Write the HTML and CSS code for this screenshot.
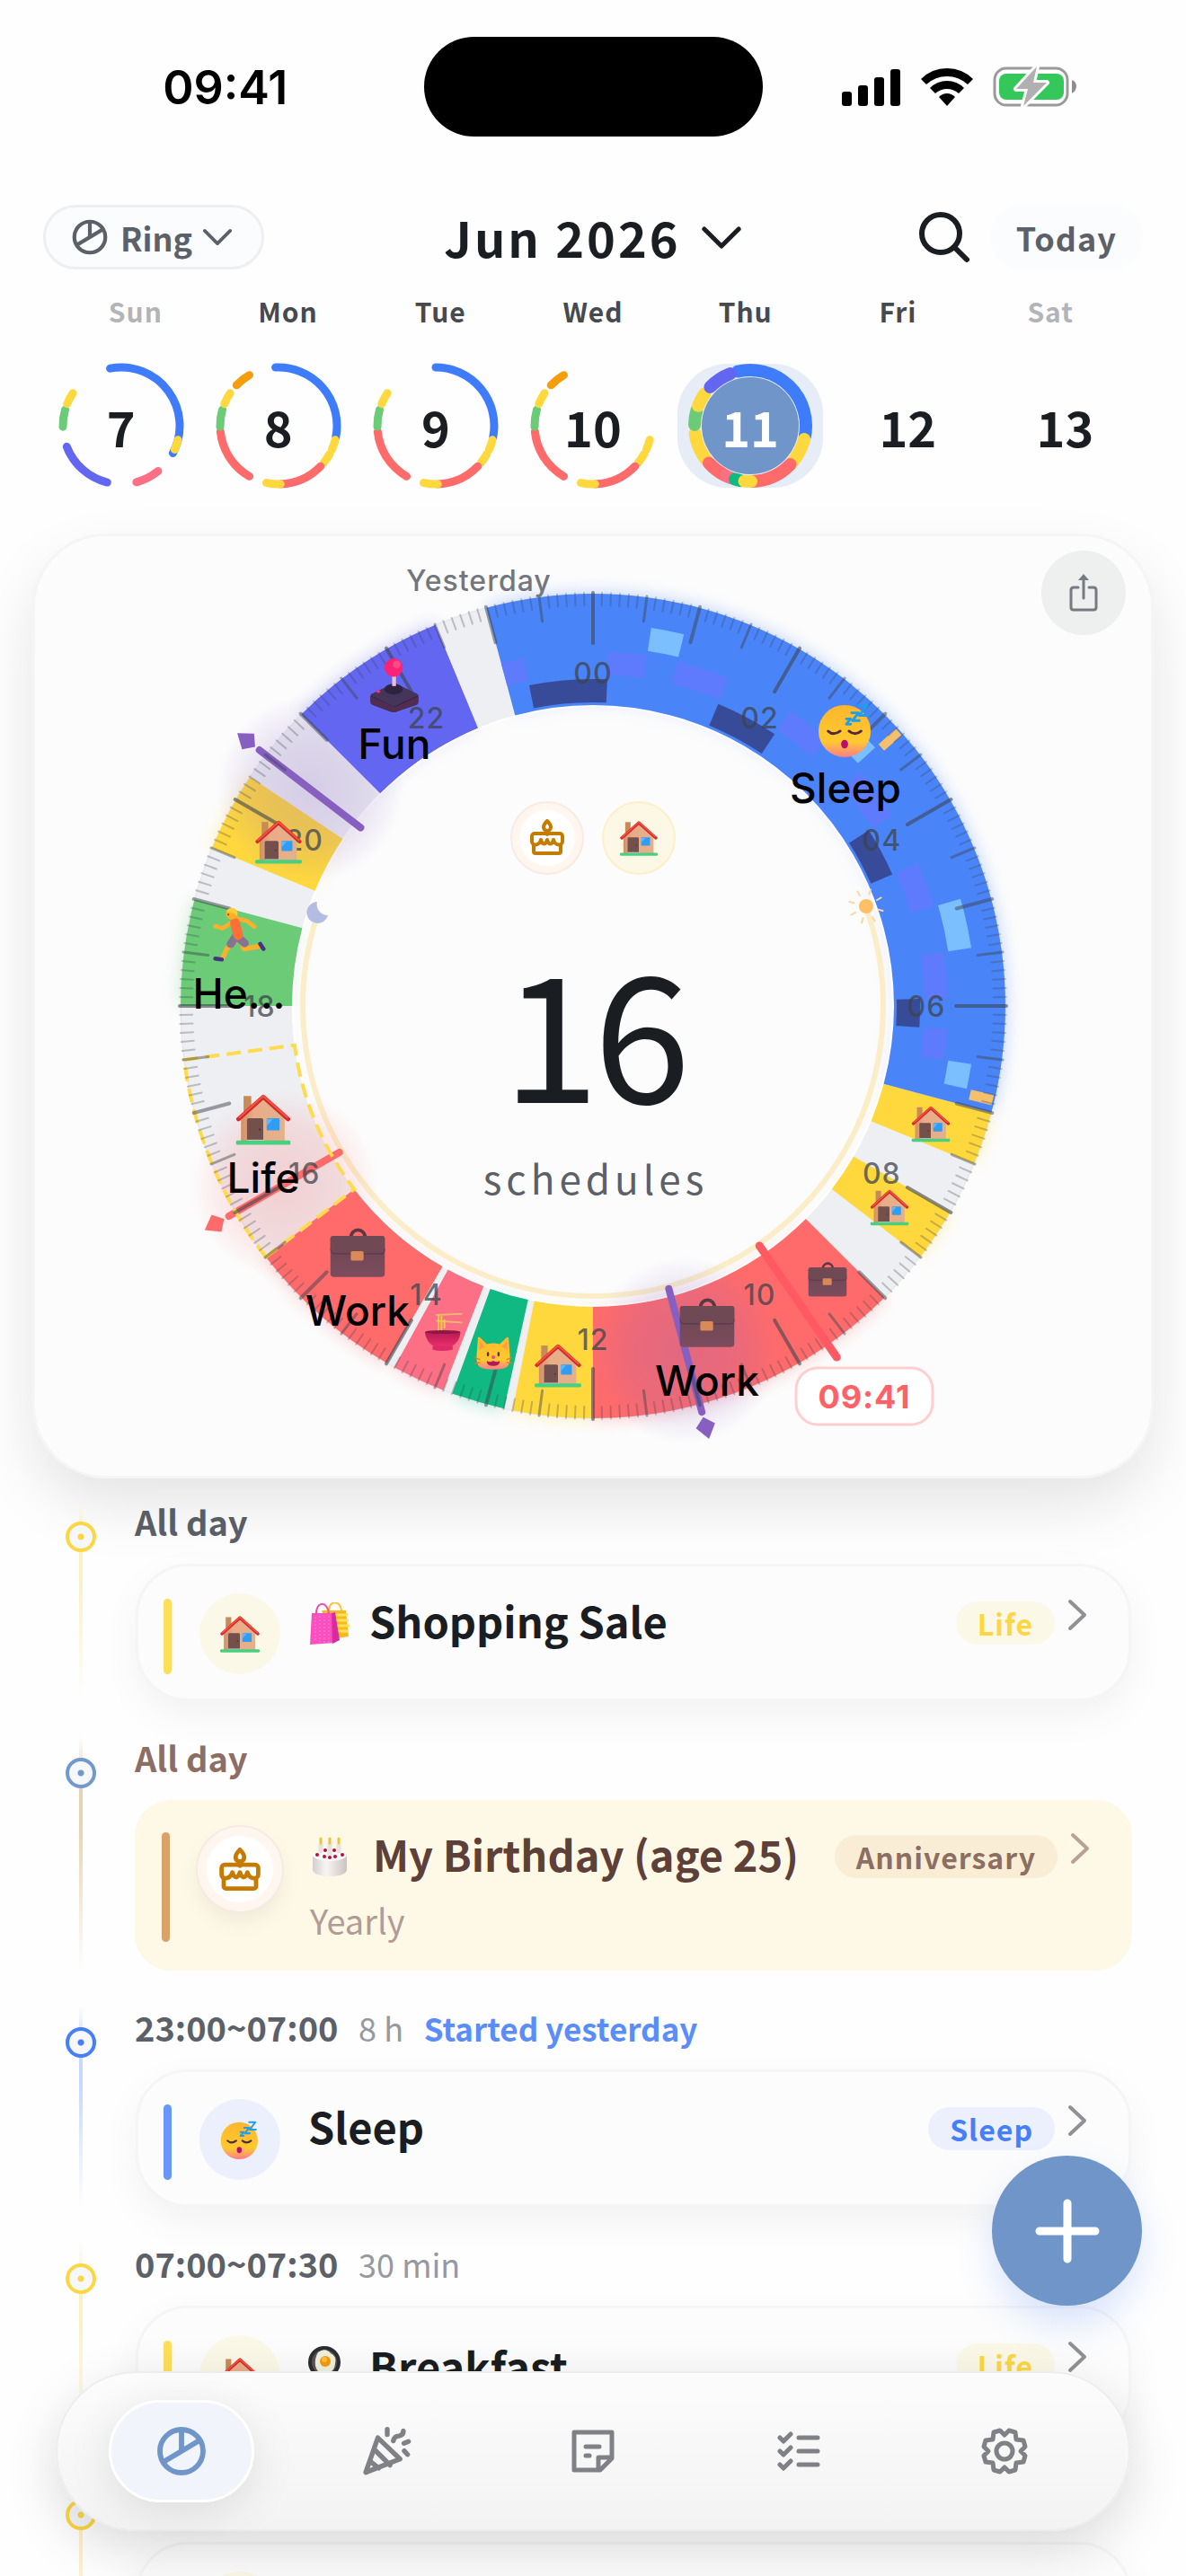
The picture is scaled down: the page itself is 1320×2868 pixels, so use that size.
FILE: index.html
```html
<!DOCTYPE html>
<html lang="en">

<head>
    <meta charset="UTF-8">
    <meta name="viewport" content="width=device-width, initial-scale=1.0">
    <title>Schedule Ring</title>
    <link rel="stylesheet" href="styles.css">
</head>

<body>
    <!-- shared icons -->
    <svg class="sprite" aria-hidden="true">
        <defs>
            <linearGradient id="wallFill" x1="0" x2="1"><stop offset="0" stop-color="#d29068"/><stop offset=".3" stop-color="#e9ad88"/><stop offset="1" stop-color="#e3b08a"/></linearGradient>
            <linearGradient id="caseFill" x1="0" y1="0" x2="0" y2="1"><stop offset="0" stop-color="#684650"/><stop offset="1" stop-color="#7d4c5e"/></linearGradient>
            <linearGradient id="faceFill" x1="0" y1="0" x2="0" y2="1"><stop offset="0" stop-color="#ffb62c"/><stop offset=".7" stop-color="#ffc92f"/><stop offset="1" stop-color="#ff7d8c"/></linearGradient>
            <linearGradient id="bowlFill" x1="0" y1="0" x2="0" y2="1"><stop offset="0" stop-color="#b51c55"/><stop offset="1" stop-color="#ee2e6c"/></linearGradient>
            <linearGradient id="cakeFill" x1="0" x2="1"><stop offset="0" stop-color="#d4cfcd"/><stop offset=".4" stop-color="#f7f5f4"/><stop offset="1" stop-color="#c9c3c0"/></linearGradient>
        </defs>
        <symbol id="ring" viewBox="0 0 24 24">
            <g fill="none" stroke="currentColor" stroke-width="2.2"><circle cx="12" cy="12" r="9"/><path d="M12 3v9M4.3 16.6 19.7 7.4"/></g>
        </symbol>
        <symbol id="chevronDown" viewBox="0 0 24 14">
            <path d="M2 2l10 10L22 2" fill="none" stroke="currentColor" stroke-width="2.6" stroke-linecap="round" stroke-linejoin="round"/>
        </symbol>
        <symbol id="chevronRight" viewBox="0 0 22 36">
            <path d="M3 3l16 15L3 33" fill="none" stroke="currentColor" stroke-width="4" stroke-linecap="round" stroke-linejoin="round"/>
        </symbol>
        <symbol id="cake" viewBox="0 0 38 40">
            <g fill="none" stroke="currentColor" stroke-width="4" stroke-linejoin="round" stroke-linecap="round">
                <path d="M19 2c-3 3-4 5-4 7a4 4 0 0 0 8 0c0-2-1-4-4-7zM19 13v4"/>
                <path d="M2 25v-6a3 3 0 0 1 3-3h28a3 3 0 0 1 3 3v6c0 5-8 5-10-2-2 6-5 6-7 0-2 6-5 6-7 0-2 7-10 7-10 2zM4 28v8a2 2 0 0 0 2 2h26a2 2 0 0 0 2-2v-8"/>
            </g>
        </symbol>
        <symbol id="house" viewBox="0 0 64 60">
            <path d="M9 3h9v24H9z" fill="#c88a59"/>
            <path d="M6 29 32 5l25 24v27H6z" fill="url(#wallFill)"/>
            <rect x="13" y="29" width="19" height="27" rx="2" fill="#74504c"/>
            <circle cx="28" cy="42" r="1" fill="#3e2723"/>
            <rect x="36" y="29" width="15" height="14" rx="1" fill="#2f9df4"/>
            <path d="M36 30h7l-7 8z" fill="#5cb8fa"/>
            <rect x="13" y="54" width="20" height="3" fill="#d8cfd0"/>
            <path d="M3 30 32 4l29 26" fill="none" stroke="#d8282f" stroke-width="5" stroke-linecap="round" stroke-linejoin="round"/>
            <path d="M4 28 32 3l28 25" fill="none" stroke="#f25a3e" stroke-width="2" stroke-linecap="round"/>
            <rect y="55" width="64" height="5" rx="2" fill="#48cf80"/>
        </symbol>
        <symbol id="briefcase" viewBox="0 0 64 58">
            <path d="M24 13c0-13 17-13 17 0" fill="none" stroke="#5a3a42" stroke-width="4"/>
            <rect y="10" width="64" height="48" rx="4" fill="url(#caseFill)"/>
            <path d="M0 14q0-4 4-4h56q4 0 4 4v12q0 5-5 5H6q-6 0-6-7z" fill="#6f4a55"/>
            <path d="M0 25q1 6 6 6h53q5 0 5-6" fill="none" stroke="#5b2f4a" stroke-width="1"/>
            <rect x="24" y="28" width="15" height="11" rx="2" fill="#d98a56"/>
        </symbol>
        <symbol id="sleepy" viewBox="0 0 64 64">
            <circle cx="31" cy="34" r="30" fill="url(#faceFill)"/>
            <g fill="none" stroke="#53293c" stroke-width="3" stroke-linecap="round">
                <path d="M12 34q6 6 14 0M36 34q7 6 14 0"/>
            </g>
            <ellipse cx="31" cy="49" rx="4" ry="5" fill="#bb0a72"/>
            <path d="M47 4h10L48 16h10M39 13h8l-7 9h8M33 20h5l-5 6h5" fill="none" stroke="#1e9ff0" stroke-width="3" stroke-linejoin="round" stroke-linecap="round"/>
        </symbol>
        <symbol id="joystick" viewBox="0 0 64 70">
            <path d="M3 46 28 34q4-2 8 0l25 12q2 1 2 3v8q0 2-2 3L35 69q-4 2-8 0L3 60q-2-1-2-3v-8q0-2 2-3z" fill="#33203b"/>
            <path d="M3 46 28 34q4-2 8 0l25 12q2 2 0 3L35 61q-4 2-8 0L3 49q-2-1 0-3z" fill="#45355a"/>
            <path d="M1 49l28 13q3 1 6 0l28-13v8q0 2-2 3L35 69q-4 2-8 0L3 60q-2-1-2-3z" fill="#4f2e52"/>
            <ellipse cx="31" cy="40" rx="12" ry="7" fill="#2f2440"/>
            <rect x="29" y="20" width="5" height="16" fill="#e6c2da"/>
            <circle cx="31" cy="12" r="12" fill="#fb2277"/>
            <circle cx="35" cy="8" r="5" fill="#ff5d86" opacity=".7"/>
            <ellipse cx="11" cy="43" rx="3" ry="2" fill="#f5307c"/>
        </symbol>
        <symbol id="runner" viewBox="0 0 64 66">
            <g fill="none" stroke-linecap="round" stroke-linejoin="round">
                <path d="M3 22 12 25 24 17M30 13 42 16 51 23" stroke="#ffb02a" stroke-width="5"/>
                <path d="M29 40 17 50 12 61M35 41 38 50 56 47" stroke="#ffb02a" stroke-width="6"/>
                <path d="M28 35 22 44M32 37l7 6" stroke="#83758f" stroke-width="10"/>
                <path d="M27 18l4 15" stroke="#ff7038" stroke-width="12"/>
                <path d="M3 62l8 1M58 44l4 6" stroke="#46347c" stroke-width="5"/>
            </g>
            <circle cx="23" cy="7" r="7" fill="#ffae25"/>
            <path d="M16 4q4-6 11-3 4 2 3 9l-4-3z" fill="#ffcb35"/>
            <circle cx="19" cy="8" r="1" fill="#5d3a2a"/>
        </symbol>
        <symbol id="noodles" viewBox="0 0 64 64">
            <path d="M20 3 62 1M20 13l42 3" stroke="#e6b96d" stroke-width="3" stroke-linecap="round"/>
            <path d="M23 3v29M28 4v28M33 11v15" stroke="#f4cb4b" stroke-width="3"/>
            <path d="M0 32h60q0 17-18 26H18Q1 50 0 32z" fill="url(#bowlFill)"/>
            <path d="M13 56h34v6q-17 4-34 0z" fill="#dc2a66"/>
            <ellipse cx="30" cy="32" rx="30" ry="3" fill="#8f1744"/>
        </symbol>
        <symbol id="cat" viewBox="0 0 64 58">
            <path d="M6 2q2-3 5 1l10 10q11-3 22 0L53 3q4-4 5 0l2 27q2 22-10 24-18 4-36 0Q2 52 4 30z" fill="url(#faceFill)"/>
            <path d="M9 8l8 9-9 6zM55 8l-8 9 9 6z" fill="#ff9b4a"/>
            <ellipse cx="23" cy="30" rx="2" ry="4" fill="#5a3a2f"/><ellipse cx="41" cy="30" rx="2" ry="4" fill="#5a3a2f"/>
            <circle cx="32" cy="35" r="3" fill="#ff3f8a"/>
            <path d="M21 41q5 4 11 0 6 4 11 0 0 9-11 9t-11-9z" fill="#b41758"/>
            <path d="M1 36l8 3M0 46l9-2M63 36l-8 3M64 46l-9-2" stroke="#e87528" stroke-width="2" stroke-linecap="round"/>
        </symbol>
        <symbol id="bags" viewBox="0 0 48 48">
            <path d="M15 9h27l3 29-20 3z" fill="#f7b91e"/>
            <path d="M20 14h24M21 20h24M22 26h24M23 32h22" stroke="#ffe15a" stroke-width="3"/>
            <path d="M23 11C22-3 36-3 37 9" fill="none" stroke="#ffc32e" stroke-width="2"/>
            <path d="M4 12h22l3 33-27 2z" fill="#fb4fc0"/>
            <path d="M26 12l4-1 5 31-8 4z" fill="#d92ba0"/>
            <path d="M8 16v28M13 15v30M18 15v30M23 15v30" stroke="#ff83d6" stroke-width="1" stroke-dasharray="2 2"/>
            <path d="M9 14C8-2 22-2 23 13" fill="none" stroke="#f04cae" stroke-width="2"/>
        </symbol>
        <symbol id="birthday" viewBox="0 0 44 44">
            <path d="M3 20v16q2 7 19 7t19-7V20z" fill="url(#cakeFill)"/>
            <ellipse cx="22" cy="19" rx="19" ry="7" fill="#fbfafa"/>
            <path d="M12 7v10M22 6v14M32 7v10" stroke="#e8e2dc" stroke-width="5"/>
            <path d="M12 1v5M22 1v5M32 1v5" stroke="#eec33c" stroke-width="3" stroke-linecap="round"/>
            <g fill="#b70f3c"><circle cx="8" cy="19" r="2"/><circle cx="16" cy="21" r="2"/><circle cx="22" cy="22" r="2"/><circle cx="28" cy="21" r="2"/><circle cx="36" cy="19" r="2"/><circle cx="17" cy="14" r="2"/><circle cx="27" cy="14" r="2"/></g>
        </symbol>
        <symbol id="pan" viewBox="0 0 48 56">
            <circle cx="18" cy="20" r="18" fill="#2c2e30"/>
            <circle cx="18" cy="20" r="14" fill="#5b5357"/>
            <path d="M11 9q8-6 14 1 7 3 5 12-1 10-10 9-10 3-12-7-1-9 3-15z" fill="#eef0dd"/>
            <circle cx="19" cy="19" r="6" fill="#f39a0c"/>
            <circle cx="18" cy="17" r="3" fill="#ffbd3e"/>
            <path d="M18 39v16" stroke="#2c2e30" stroke-width="6" stroke-linecap="round"/>
        </symbol>
    </svg>

    <div class="statusBar">
        <span class="clock">09:41</span>
        <span class="island"></span>
        <span class="signals">
            <svg width="66" height="42" viewBox="0 0 66 42"><rect y="26" width="11" height="16" rx="3"/><rect x="18" y="19" width="11" height="23" rx="3"/><rect x="36" y="10" width="11" height="32" rx="3"/><rect x="54" y="1" width="11" height="41" rx="3"/></svg>
            <svg width="58" height="42" viewBox="0 0 58 42"><path d="M29 0q17 0 29 12l-6 6Q42 9 29 9T6 18l-6-6Q12 0 29 0z"/><path d="M29 14q11 0 19 8l-6 6q-6-5-13-5t-13 5l-6-6q8-8 19-8z"/><path d="M29 28q5 0 9 4l-9 10-9-10q4-4 9-4z"/></svg>
            <svg width="94" height="46" viewBox="0 0 94 46">
                <rect x="2" y="2" width="81" height="41" rx="13" fill="none" stroke="#9a9a9a" stroke-width="3"/>
                <rect x="7" y="8" width="72" height="29" rx="8" fill="#34c759"/>
                <path d="M88 15q5 2 5 7t-5 8z" fill="#8e8e8e"/>
                <path d="M49 0 26 25h13l-5 19 26-26H45z" fill="#b0b0b0" stroke="#fefefe" stroke-width="6" stroke-linejoin="round" paint-order="stroke"/>
            </svg>
        </span>
    </div>

    <header class="topBar">
        <button class="ringButton" type="button">
            <svg width="46" height="46"><use href="#ring"/></svg>
            Ring
            <svg width="34" height="20"><use href="#chevronDown"/></svg>
        </button>
        <button class="monthButton" type="button">
            Jun 2026
            <svg width="46" height="27"><use href="#chevronDown"/></svg>
        </button>
        <div class="topActions">
            <button class="searchButton" type="button" aria-label="Search">
                <svg width="58" height="58" viewBox="0 0 58 58"><g fill="none" stroke="currentColor" stroke-width="6" stroke-linecap="round"><circle cx="25" cy="25" r="21"/><path d="M40 40l14 14"/></g></svg>
            </button>
            <button class="todayButton" type="button">Today</button>
        </div>
    </header>

    <div class="weekNames">
        <span class="weekend">Sun</span><span>Mon</span><span>Tue</span><span>Wed</span><span>Thu</span><span>Fri</span><span class="weekend">Sat</span>
    </div>
    <div class="weekDays" id="weekDays"></div>

    <section class="dialCard">
        <svg class="dial" id="dial" viewBox="-621 -523 1242 1046"></svg>
        <button class="shareButton" type="button" aria-label="Share">
            <svg width="32" height="42" viewBox="0 0 32 42"><path d="M10 15H5q-3 0-3 3v19q0 3 3 3h22q3 0 3-3V18q0-3-3-3h-5M16 27V6" fill="none" stroke="currentColor" stroke-width="3" stroke-linecap="round"/><path d="M16 0l6 7H10z" fill="currentColor"/></svg>
        </button>
    </section>

    <main class="timeline">
        <article class="item yellow">
            <div class="rail"><span class="dot"></span></div>
            <div class="content">
                <p class="time">All day</p>
                <div class="card">
                    <span class="bar"></span>
                    <span class="avatar"><svg width="44" height="42"><use href="#house"/></svg></span>
                    <h2><svg width="48" height="48"><use href="#bags"/></svg>Shopping Sale</h2>
                    <span class="tag">Life</span>
                    <svg class="arrow" width="22" height="36"><use href="#chevronRight"/></svg>
                </div>
            </div>
        </article>
        <article class="item birthday">
            <div class="rail"><span class="dot"></span></div>
            <div class="content">
                <p class="time">All day</p>
                <div class="card">
                    <span class="bar"></span>
                    <span class="avatar"><svg width="46" height="48"><use href="#cake"/></svg></span>
                    <div class="text">
                        <h2><svg width="44" height="48"><use href="#birthday"/></svg>My Birthday (age 25)</h2>
                        <p>Yearly</p>
                    </div>
                    <span class="tag">Anniversary</span>
                    <svg class="arrow" width="22" height="36"><use href="#chevronRight"/></svg>
                </div>
            </div>
        </article>
        <article class="item blue">
            <div class="rail"><span class="dot"></span></div>
            <div class="content">
                <p class="time">23:00~07:00 <small>8 h</small> <em>Started yesterday</em></p>
                <div class="card">
                    <span class="bar"></span>
                    <span class="avatar"><svg width="44" height="44"><use href="#sleepy"/></svg></span>
                    <h2>Sleep</h2>
                    <span class="tag">Sleep</span>
                    <svg class="arrow" width="22" height="36"><use href="#chevronRight"/></svg>
                </div>
            </div>
        </article>
        <article class="item yellow">
            <div class="rail"><span class="dot"></span></div>
            <div class="content">
                <p class="time">07:00~07:30 <small>30 min</small></p>
                <div class="card">
                    <span class="bar"></span>
                    <span class="avatar"><svg width="44" height="42"><use href="#house"/></svg></span>
                    <h2><svg width="48" height="56"><use href="#pan"/></svg>Breakfast</h2>
                    <span class="tag">Life</span>
                    <svg class="arrow" width="22" height="36"><use href="#chevronRight"/></svg>
                </div>
            </div>
        </article>
        <article class="item yellow">
            <div class="rail"><span class="dot"></span></div>
            <div class="content">
                <p class="time"></p>
                <div class="card">
                    <span class="bar"></span>
                    <span class="avatar"></span>
                </div>
            </div>
        </article>
    </main>

    <button class="addButton" type="button" aria-label="Add schedule">
        <svg width="72" height="72" viewBox="0 0 72 72"><path d="M36 5v62M5 36h62" stroke="#fff" stroke-width="9" stroke-linecap="round"/></svg>
    </button>

    <nav class="tabBar">
        <button class="active" type="button" aria-label="Ring"><svg width="64" height="64"><use href="#ring"/></svg></button>
        <button type="button" aria-label="Events">
            <svg width="54" height="54" viewBox="0 0 160 160"><g fill="none" stroke="currentColor" stroke-width="16" stroke-linecap="round" stroke-linejoin="round"><path d="M49 36 122 106 9 150zM37 74l52 52M24 114l28 22M80 8v17M100 46q4-16 18-16 16-2 15-17M135 54l15-6M136 79l11 12"/></g></svg>
        </button>
        <button type="button" aria-label="Notes">
            <svg width="48" height="48" viewBox="0 0 48 48"><g fill="none" stroke="currentColor" stroke-width="5" stroke-linecap="round" stroke-linejoin="round"><path d="M3 3h42v29L32 45H3zM30 44V31h14M16 19h15M16 29h4"/></g></svg>
        </button>
        <button type="button" aria-label="Todos">
            <svg width="48" height="44" viewBox="0 0 48 44"><g fill="none" stroke="currentColor" stroke-width="5" stroke-linecap="round" stroke-linejoin="round"><path d="M3 7l4 4 8-8M3 22l4 4 8-8M3 37l4 4 8-8M24 7h21M24 22h21M24 37h21"/></g></svg>
        </button>
        <button type="button" aria-label="Settings">
            <svg width="54" height="54" viewBox="-27 -27 54 54"><g fill="none" stroke="currentColor" stroke-width="5" stroke-linejoin="round"><circle r="9"/><path d="M0-18 5-23 12-21 13-13 21-12 23-5 18 0 23 5 21 12 13 13 12 21 5 23 0 18-5 23-12 21-13 13-21 12-23 5-18 0-23-5-21-12-13-13-12-21-5-23z"/></g></svg>
        </button>
    </nav>

    <script src="dial.js"></script>
</body>

</html>
```

FILE: styles.css
```css
* {
    box-sizing: border-box;
}

html {
    overflow: hidden;
}

body {
    margin: 0;
    height: 100vh;
    overflow: hidden;
    background-color: #fefefe;
    color: #1a1d21;
    font-family: "Noto Sans CJK SC", "Noto Sans", sans-serif;
}

button {
    padding: 0;
    border: 0;
    background: none;
    color: inherit;
    font: inherit;
    cursor: pointer;
}

p,
h2 {
    margin: 0;
}

svg {
    flex: none;
}

.sprite {
    position: absolute;
    width: 0;
    height: 0;
}

/* status bar */
.statusBar {
    display: grid;
    grid-template-columns: 1fr auto 1fr;
    align-items: center;
    padding-top: 41px;
}

.clock {
    padding: 2px 0 0 30px;
    text-align: center;
    font-family: Inter, sans-serif;
    font-size: 52px;
    font-weight: 600;
    line-height: 60px;
    color: #000;
}

.island {
    width: 377px;
    height: 111px;
    border-radius: 56px;
    background-color: #000;
}

.signals {
    display: flex;
    align-items: center;
    justify-content: center;
    gap: 22px;
    padding-right: 32px;
}

/* header */
.topBar {
    display: grid;
    grid-template-columns: 1fr auto 1fr;
    align-items: center;
    margin-top: 76px;
    padding: 0 48px;
}

.ringButton {
    justify-self: start;
    display: flex;
    align-items: center;
    gap: 11px;
    height: 72px;
    padding: 0 32px 0 26px;
    border: 3px solid #eeeff3;
    border-radius: 36px;
    background-color: #fbfcfe;
    color: #5c6068;
    font-size: 36px;
    font-weight: 700;
}

.monthButton {
    display: flex;
    align-items: center;
    gap: 22px;
    font-size: 54px;
    font-weight: 700;
    line-height: 72px;
    letter-spacing: 3px;
}

.topActions {
    justify-self: end;
    display: flex;
    align-items: center;
    gap: 22px;
}

.searchButton {
    height: 58px;
}

.todayButton {
    height: 72px;
    padding: 0 29px;
    border-radius: 36px;
    background-color: #fbfcfe;
    color: #5c6068;
    font-size: 36px;
    font-weight: 700;
    letter-spacing: 1px;
}

/* week strip */
.weekNames {
    display: grid;
    grid-template-columns: repeat(7, 1fr);
    margin-top: 22px;
    padding: 0 66px;
    text-align: center;
    font-size: 30px;
    font-weight: 700;
    line-height: 48px;
    letter-spacing: 1px;
    color: #464a50;
}

.weekNames .weekend {
    color: #b2b4b8;
}

.weekDays {
    display: grid;
    grid-template-columns: repeat(7, 1fr);
    justify-items: center;
    margin-top: 35px;
    padding: 0 47px;
}

.day {
    position: relative;
    display: grid;
    place-items: center;
    width: 162px;
    height: 138px;
    border-radius: 56px;
    font-size: 54px;
    font-weight: 700;
}

.day svg {
    position: absolute;
    inset: 0;
    margin: auto;
}

.day span {
    position: relative;
}

.day.selected {
    background-color: #e7edf6;
    color: #fff;
}

/* ring card */
.dialCard {
    position: relative;
    margin: 54px 39px 0;
    border-radius: 78px;
    background-color: #fcfcfc;
    box-shadow: 0 0 0 3px #f5f5f5, 0 30px 70px rgba(0, 0, 0, 0.11);
}

.dial {
    display: block;
    width: 100%;
    border-radius: 78px;
}

.dial .hour {
    font: 500 32px Inter, sans-serif;
    letter-spacing: 1px;
    fill: #3e444e;
    fill-opacity: 0.75;
    text-anchor: middle;
}

.dial .label {
    font: 500 46px Inter, sans-serif;
    fill: #000;
    text-anchor: middle;
}

.dial .yesterday {
    font: 500 32px Inter, sans-serif;
    letter-spacing: 1px;
    fill: #73777d;
    text-anchor: middle;
}

.dial .now {
    font: 700 36px Inter, sans-serif;
    letter-spacing: 1px;
    fill: #ff6166;
    text-anchor: middle;
}

.dial .count {
    font-size: 194px;
    letter-spacing: -6px;
    fill: #1a1d21;
    text-anchor: middle;
}

.dial .countLabel {
    font-size: 44px;
    letter-spacing: 5px;
    fill: #5c6068;
    text-anchor: middle;
}

.shareButton {
    position: absolute;
    top: 16px;
    right: 28px;
    display: grid;
    place-items: center;
    width: 94px;
    height: 94px;
    border-radius: 50%;
    background-color: #eeefef;
    color: #777b81;
}

/* timeline */
.timeline {
    display: flex;
    flex-direction: column;
    gap: 39px;
    padding: 27px 60px 0;
}

.item {
    display: grid;
    grid-template-columns: 60px 1fr;
    gap: 30px;
}

.rail {
    position: relative;
    display: flex;
    justify-content: center;
    padding-top: 24px;
}

.rail::before {
    content: "";
    position: absolute;
    top: 0;
    bottom: 0;
    width: 4px;
    background: linear-gradient(transparent, var(--line) 20%, var(--line) 40%, transparent);
}

.dot {
    position: relative;
    width: 34px;
    height: 34px;
    border: 4px solid var(--accent);
    border-radius: 50%;
    background: radial-gradient(circle, var(--accent) 3px, #f5f7fb 4px);
}

.time {
    height: 48px;
    margin-bottom: 23px;
    font-size: 38px;
    font-weight: 700;
    line-height: 48px;
    color: #5c6068;
}

.time small {
    margin-left: 14px;
    font-size: 36px;
    font-weight: 400;
    color: #96999f;
}

.time em {
    margin-left: 14px;
    font-size: 35px;
    font-style: normal;
    color: #5a8dfa;
}

.card {
    display: flex;
    align-items: flex-start;
    min-height: 153px;
    margin: 0 1px;
    padding: 36px 46px 27px 28px;
    border: 3px solid #f5f5f6;
    border-radius: 58px;
    background-color: #fcfcfc;
    box-shadow: 0 16px 44px rgba(0, 0, 0, 0.05);
}

.bar {
    flex: none;
    align-self: stretch;
    width: 9px;
    border-radius: 5px;
    background-color: var(--bar);
}

.avatar {
    flex: none;
    display: grid;
    place-items: center;
    width: 90px;
    height: 90px;
    margin: -6px 31px 0;
    border-radius: 50%;
    background-color: var(--soft);
}

.card h2 {
    display: flex;
    align-items: center;
    gap: 20px;
    margin-top: -4px;
    font-size: 47px;
    font-weight: 700;
    line-height: 56px;
}

.card h2 svg {
    margin-top: 8px;
}

.card .text p {
    margin-top: 22px;
    font-size: 38px;
    line-height: 48px;
    color: #b09c95;
}

.tag {
    margin: 3px 0 0 auto;
    padding: 0 24px;
    border-radius: 24px;
    background-color: var(--soft);
    color: var(--accent);
    font-size: 32px;
    font-weight: 700;
    line-height: 48px;
    letter-spacing: 1px;
}

.arrow {
    margin-left: 14px;
    color: #8f9195;
}

.yellow {
    --accent: #fcd743;
    --bar: #ffde59;
    --line: #fbf0c4;
    --soft: #fcf8e8;
}

.blue {
    --accent: #467ffa;
    --bar: #6996fb;
    --line: #c9d9fc;
    --soft: #ecf0fd;
}

.birthday {
    --accent: #7299cc;
    --bar: #d9a267;
    --line: #ecd2b4;
    --soft: #faedd5;
}

.birthday .time {
    color: #8d6e63;
}

.birthday .card {
    min-height: 190px;
    margin: 0;
    padding: 36px 47px 32px 30px;
    border: 0;
    border-radius: 40px;
    background-color: #fef8e7;
    box-shadow: none;
    color: #5d4037;
}

.birthday .avatar {
    width: 94px;
    height: 94px;
    border: 10px solid #fff7ef;
    outline: 2px solid #f7eae2;
    background-color: #fff;
    color: #c57b00;
    box-shadow: 0 12px 24px rgba(0, 0, 0, 0.06);
}

.birthday h2 {
    gap: 26px;
}

.birthday .tag {
    color: #8d6e63;
}

.birthday .arrow {
    color: #b8a298;
}

/* floating controls */
.addButton {
    position: fixed;
    right: 49px;
    bottom: 301px;
    display: grid;
    place-items: center;
    width: 167px;
    height: 167px;
    border-radius: 50%;
    background-color: #6f95c9;
    box-shadow: 0 20px 40px rgba(70, 127, 250, 0.2);
}

.tabBar {
    position: fixed;
    right: 62px;
    bottom: 50px;
    left: 62px;
    display: grid;
    grid-template-columns: repeat(5, 1fr);
    place-items: center;
    height: 178px;
    padding: 0 24px;
    border: 2px solid #ededee;
    border-radius: 89px;
    background: linear-gradient(#fcfcfc, #f3f3f3);
    box-shadow: 0 20px 60px rgba(0, 0, 0, 0.14);
    color: #7f8186;
}

.tabBar button {
    display: grid;
    place-items: center;
    width: 162px;
    height: 114px;
    border-radius: 57px;
}

.tabBar .active {
    border: 3px solid #fff;
    background-color: #f1f4fa;
    color: #6f95c9;
    box-shadow: 0 10px 50px rgba(0, 0, 0, 0.1);
}
```

FILE: dial.js
```js
const BLUE = "#3f7cfc", YELLOW = "#ffd83d", RED = "#ff6b6b", GREEN = "#6bcb77";
const INDIGO = "#6366f1", PINK = "#fd6f85", TEAL = "#10b981", ORANGE = "#f59e0b";
const OUTER = 459, INNER = 335;

// degrees are clockwise from the top
function point(deg, r) {
    const a = (deg - 90) * Math.PI / 180;
    return `${(Math.cos(a) * r).toFixed(2)} ${(Math.sin(a) * r).toFixed(2)}`;
}

function arc(from, to, r) {
    return `M${point(from, r)}A${r} ${r} 0 ${to - from > 180 ? 1 : 0} 1 ${point(to, r)}`;
}

function sector(from, to, r1, r2) {
    const big = to - from > 180 ? 1 : 0;
    return `M${point(from, r2)}A${r2} ${r2} 0 ${big} 1 ${point(to, r2)}L${point(to, r1)}A${r1} ${r1} 0 ${big} 0 ${point(from, r1)}Z`;
}

// ---- week strip ----
const routine = [[104, 114, YELLOW], [119, 129, YELLOW], [134, 178, RED], [178, 192, YELLOW],
    [210, 264, RED], [269, 286, GREEN], [292, 304, YELLOW]];
const week = [
    { day: 7, arcs: [[-11, 118, BLUE], [104, 114, YELLOW], [141, 165, PINK], [194, 249, INDIGO], [269, 286, GREEN], [292, 304, YELLOW]] },
    { day: 8, arcs: [[-3, 101, BLUE], ...routine, [314, 330, ORANGE]] },
    { day: 9, arcs: [[0, 101, BLUE], ...routine] },
    { day: 10, arcs: [...routine, [314, 330, ORANGE]] },
    { day: 11, selected: true, arcs: [[-13, 101, BLUE], [104, 129, YELLOW], [232, 262, YELLOW], [134, 178, RED], [208, 228, RED], [200, 206, PINK],
        [190, 196, TEAL], [179, 186, YELLOW], [271, 286, GREEN], [291, 305, YELLOW], [314, 339, INDIGO]] },
    { day: 12, arcs: [] },
    { day: 13, arcs: [] }
];

document.getElementById("weekDays").innerHTML = week.map(d => {
    const r = d.selected ? 62 : 65;
    const width = d.selected ? 14 : 9;
    const disc = d.selected ? `<circle r="54" fill="#6f95c9"/>` : "";
    const arcs = d.arcs.map(([a, b, c]) => `<path d="${arc(a, b, r)}" stroke="${c}"/>`).join("");
    return `<div class="day${d.selected ? " selected" : ""}">
        <svg width="140" height="140" viewBox="-70 -70 140 140">${disc}<g fill="none" stroke-width="${width}" stroke-linecap="round">${arcs}</g></svg>
        <span>${d.day}</span></div>`;
}).join("");

// ---- big dial, start and end in hours ----
const blocks = [
    [7, 7.5, YELLOW], [8, 8.5, YELLOW], [9, 12, RED], [12, 12.75, YELLOW], [12.83, 13.33, TEAL],
    [13.42, 13.92, PINK], [14, 15.5, RED], [18, 19, GREEN], [19.5, 20.25, YELLOW], [21, 22.5, INDIGO], [-1, 7, "#4a84f9"]
];

// sleep stages, start and end in degrees
const stages = [
    { color: "#384b98", r: 338, parts: [[-11.25, 2.5], [22.5, 33.75], [57.5, 66.25], [88.75, 93.75]] },
    { color: "#5e7bfd", r: 369, parts: [[-15, -11.25], [2.5, 8.75], [13.75, 22.5], [33.75, 41.25], [48.75, 57.5], [66.25, 73.75], [81.25, 88.75], [93.75, 98.75]] },
    { color: "#7cbffe", r: 400, parts: [[8.75, 13.75], [41.25, 47.5], [73.75, 81.25], [98.75, 102.5]] },
    { color: "#f5c06b", r: 431, parts: [[47.5, 48.75], [102.5, 104]] }
];

// icon, center x, center y, size, label
const icons = [
    ["joystick", -221, -357, 60, "Fun"], ["house", -350, -183, 52], ["runner", -394, -79, 60, "He..."],
    ["house", -367, 126, 61, "Life"], ["briefcase", -262, 274, 61, "Work"], ["noodles", -166, 363, 42],
    ["cat", -111, 387, 42], ["house", -39, 400, 52], ["briefcase", 127, 352, 61, "Work"],
    ["briefcase", 261, 304, 43], ["house", 376, 131, 43], ["house", 330, 224, 43], ["sleepy", 281, -308, 62, "Sleep"]
];

let svg = `<defs>
    <filter id="soft" x="-20%" y="-20%" width="140%" height="140%"><feGaussianBlur stdDeviation="9"/></filter>
    <radialGradient id="purpleGlow"><stop offset="0" stop-color="#865fc0" stop-opacity=".24"/><stop offset=".6" stop-color="#865fc0" stop-opacity=".16"/><stop offset="1" stop-color="#865fc0" stop-opacity="0"/></radialGradient>
    <radialGradient id="redGlow"><stop offset="0" stop-color="#ff6b6b" stop-opacity=".24"/><stop offset=".6" stop-color="#ff6b6b" stop-opacity=".16"/><stop offset="1" stop-color="#ff6b6b" stop-opacity="0"/></radialGradient>
</defs>`;

// colored haze under the ring
svg += `<g filter="url(#soft)" opacity=".3">`;
blocks.forEach(([a, b, c]) => svg += `<path d="${sector(a * 15, b * 15, INNER, OUTER + 2)}" fill="${c}"/>`);
svg += `</g><circle r="${INNER - 1}" fill="#fcfcfc" opacity=".6"/>`;
svg += `<path d="${arc(70, 288, 323)}" fill="none" stroke="#faedc8" stroke-width="6"/>`;
svg += `<circle r="397" fill="none" stroke="#eeeff2" stroke-width="124"/><circle r="334" fill="none" stroke="#fff" stroke-width="2"/><circle r="${OUTER}" fill="none" stroke="#e2e3e5"/>`;
blocks.forEach(([a, b, c]) => svg += `<path d="${sector(a * 15, b * 15, INNER, OUTER)}" fill="${c}"/>`);
stages.forEach(s => s.parts.forEach(([a, b]) => svg += `<path d="${sector(a, b, s.r, s.r + 26)}" fill="${s.color}"/>`));

// energy markers
function marker(deg, color) {
    return `<g stroke="${color}" fill="${color}"><path d="M${point(deg, 326)}L${point(deg, 468)}" stroke-width="8" stroke-linecap="round"/>
        <path d="M${point(deg, 474)}L${point(deg + 1.3, 484)}L${point(deg, 499)}L${point(deg - 1.3, 484)}Z" stroke="none"/></g>`;
}
[[307.5, "purpleGlow"], [165, "purpleGlow"], [240, "redGlow"]].forEach(([deg, fill]) => {
    const [x, y] = point(deg, 397).split(" ");
    svg += `<circle cx="${x}" cy="${y}" r="105" fill="url(#${fill})"/>`;
});
// the evening block covers the glow beside it
svg += `<path d="${sector(315, 337.5, INNER, OUTER)}" fill="${INDIGO}"/>`;
svg += marker(307.5, "#865fc0") + marker(165, "#865fc0") + marker(240, RED);
svg += `<path d="${sector(232.5, 262.5, INNER, OUTER)}" fill="none" stroke="#ffdb4d" stroke-width="4" stroke-dasharray="16 8"/>`;

// ticks every 5 minutes
for (let i = 0; i < 288; i++) {
    const deg = i * 1.25;
    let len = 14, width = 2, alpha = 0.3;
    if (i % 24 === 0) { len = 56; width = 4; alpha = 0.6; }
    else if (i % 12 === 0) { len = 41; width = 4; alpha = 0.5; }
    else if (i % 6 === 0) { len = 28; width = 3; alpha = 0.45; }
    svg += `<path d="M${point(deg, 460)}L${point(deg, 460 - len)}" stroke="#3e444e" stroke-opacity="${alpha}" stroke-width="${width}" stroke-linecap="round"/>`;
}
for (let h = 0; h < 24; h += 2) {
    const [x, y] = point(h * 15, 371).split(" ");
    svg += `<text class="hour" x="${x}" y="${+y + 12}">${String(h).padStart(2, "0")}</text>`;
}

// sunrise and sunset
svg += `<g transform="translate(304 -111)"><circle r="8" fill="#ffbf63"/><g stroke="#fcd79d" stroke-width="2">`;
for (let i = 0; i < 8; i++) svg += `<path d="M${point(i * 45 + 15, 13)}L${point(i * 45 + 15, 20)}"/>`;
svg += `</g></g><path d="M-307-116a12 12 0 1 0 12 15 12 12 0 0 1-12-15z" fill="#b3bce2"/>`;

icons.forEach(([name, x, y, w, label]) => {
    svg += `<use href="#${name}" x="${x - w / 2}" y="${y - w / 2}" width="${w}" height="${w}"/>`;
    if (label) svg += `<text class="label" x="${x}" y="${y + 82}">${label}</text>`;
});

// current time
svg += `<path d="M${point(145.25, 325)}L${point(145.25, 476)}" stroke="#ff5a64" stroke-width="9" stroke-linecap="round"/>
    <rect x="226" y="403" width="152" height="63" rx="24" fill="#fff" stroke="#ffcfcf" stroke-width="3"/>
    <text class="now" x="302" y="448">09:41</text>
    <text class="yesterday" x="-127" y="-462">Yesterday</text>`;

// center
svg += `<circle cx="-51" cy="-187" r="40" fill="#fff7ef" stroke="#f8ebe3" stroke-width="2"/><circle cx="-51" cy="-187" r="31" fill="#fff"/>
    <use href="#cake" x="-70" y="-208" width="38" height="40" color="#c57b00"/>
    <circle cx="51" cy="-187" r="40" fill="#fdf7e6" stroke="#fdf0c8" stroke-width="2"/>
    <use href="#house" x="30" y="-207" width="42" height="40"/>
    <text class="count" x="1" y="108">16</text>
    <text class="countLabel" x="3" y="210">schedules</text>`;

document.getElementById("dial").innerHTML = svg;
```
